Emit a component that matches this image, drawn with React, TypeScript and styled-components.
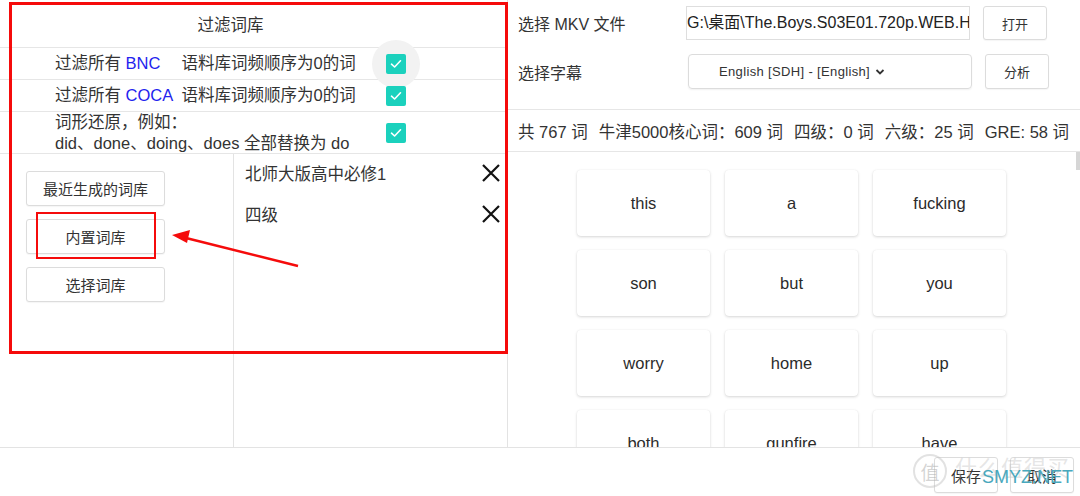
import React from 'react';
import styled, { createGlobalStyle } from 'styled-components';

const GlobalStyle = createGlobalStyle`
  html, body {
    margin: 0;
    padding: 0;
    background: #fff;
  }
  body {
    font-family: "Liberation Sans", "Noto Sans CJK SC", sans-serif;
    color: #333;
  }
`;

const Page = styled.div`
  position: relative;
  width: 1080px;
  height: 496px;
  overflow: hidden;
  display: flex;
  flex-direction: column;
`;

const Main = styled.div`
  display: flex;
  height: 448px;
  border-bottom: 1px solid #e3e3e3;
  box-sizing: border-box;
`;

const LeftPanel = styled.div`
  width: 508px;
  flex-shrink: 0;
  border-right: 1px solid #e3e3e3;
  box-sizing: border-box;
  display: flex;
  flex-direction: column;
`;

const Title = styled.div`
  height: 47px;
  display: flex;
  align-items: center;
  justify-content: center;
  padding-right: 46px;
  font-size: 16.5px;
  border-bottom: 1px solid #e6e6e6;
`;

const FilterRow = styled.div<{ tall?: boolean }>`
  height: ${(p) => (p.tall ? 41 : 31)}px;
  display: flex;
  align-items: center;
  padding-left: 55px;
  border-bottom: 1px solid #e6e6e6;
  font-size: 16.5px;
  line-height: 21px;
  position: relative;
`;

const RowText = styled.div`
  width: 331px;
  white-space: nowrap;
`;

const Corpus = styled.span`
  display: inline-block;
  width: 56px;
  color: #2323ee;
`;

const CheckWrap = styled.div`
  position: relative;
  width: 20px;
  height: 20px;
`;

const Halo = styled.div`
  position: absolute;
  left: -14px;
  top: -14px;
  width: 48px;
  height: 48px;
  border-radius: 50%;
  background: #f2f2f2;
`;

const CheckBox = styled.div`
  position: relative;
  width: 20px;
  height: 20px;
  border-radius: 2px;
  background: #1bd1bd;
  display: flex;
  align-items: center;
  justify-content: center;
`;

const LibArea = styled.div`
  flex: 1;
  display: flex;
`;

const LibButtons = styled.div`
  width: 234px;
  border-right: 1px solid #e3e3e3;
  box-sizing: border-box;
  display: flex;
  flex-direction: column;
  gap: 13px;
  padding: 17px 0 0 26px;
`;

const OutlineButton = styled.div<{ w?: number; h?: number; fs?: number }>`
  width: ${(p) => p.w ?? 139}px;
  height: ${(p) => p.h ?? 35}px;
  box-sizing: border-box;
  border: 1px solid #dcdcdc;
  border-radius: 3px;
  background: #fff;
  display: flex;
  align-items: center;
  justify-content: center;
  font-size: ${(p) => p.fs ?? 15}px;
  color: #333;
  box-shadow: 0 1px 1px rgba(0, 0, 0, 0.04);
`;

const LibList = styled.div`
  flex: 1;
  display: flex;
  flex-direction: column;
  padding: 7px 6px 0 11px;
  gap: 18px;
`;

const LibItem = styled.div`
  display: flex;
  justify-content: space-between;
  align-items: center;
  font-size: 16.5px;
  height: 23px;
`;

const RightPanel = styled.div`
  flex: 1;
  display: flex;
  flex-direction: column;
  min-width: 0;
`;

const FormArea = styled.div`
  height: 110px;
  border-bottom: 1px solid #e6e6e6;
  display: grid;
  grid-template-columns: 168px 1fr;
  grid-template-rows: 34px 35px;
  row-gap: 14px;
  padding: 6px 0 0 10px;
  box-sizing: border-box;
  align-items: center;
`;

const Label = styled.div`
  font-size: 16px;
  color: #333;
`;

const FieldRow = styled.div<{ shift?: number }>`
  display: flex;
  gap: 13px;
  margin-left: ${(p) => p.shift ?? 0}px;
  height: 100%;
`;

const PathInput = styled.div`
  width: 284px;
  box-sizing: border-box;
  border: 1px solid #dedede;
  font-size: 16px;
  line-height: 32px;
  white-space: nowrap;
  overflow: hidden;
  color: #222;
`;

const Select = styled.div`
  width: 284px;
  box-sizing: border-box;
  border: 1px solid #dcdcdc;
  border-radius: 4px;
  display: flex;
  align-items: center;
  gap: 5px;
  padding-left: 30px;
  font-size: 13px;
  letter-spacing: 0.35px;
  color: #333;
  box-shadow: 0 1px 2px rgba(0, 0, 0, 0.06);
`;

const Stats = styled.div`
  height: 41px;
  border-bottom: 1px solid #e6e6e6;
  display: flex;
  align-items: center;
  gap: 11px;
  padding-left: 10px;
  font-size: 16.5px;
  white-space: nowrap;
  overflow: hidden;
`;

const StatItem = styled.span`
  flex-shrink: 0;
`;

const WordArea = styled.div`
  position: relative;
  flex: 1;
  overflow: hidden;
`;

const ScrollThumb = styled.div`
  position: absolute;
  right: 0;
  top: 0;
  width: 4px;
  height: 18px;
  background: #d6d6d6;
`;

const WordGrid = styled.div`
  display: grid;
  grid-template-columns: repeat(3, 133px);
  grid-auto-rows: 66px;
  column-gap: 15px;
  row-gap: 14px;
  padding: 18px 0 0 69px;
`;

const WordCard = styled.div`
  border-radius: 4px;
  background: #fff;
  box-shadow: 0 1px 3px rgba(0, 0, 0, 0.16), 0 0 1px rgba(0, 0, 0, 0.08);
  display: flex;
  align-items: center;
  justify-content: center;
  font-size: 16.5px;
  color: #2b2b2b;
`;

const Footer = styled.div`
  height: 48px;
  display: flex;
  justify-content: flex-end;
  align-items: flex-start;
  gap: 12px;
  padding: 9px 6px 0 0;
  box-sizing: border-box;
`;

const RedBox = styled.div<{ x: number; y: number; w: number; h: number; t: number }>`
  position: absolute;
  left: ${(p) => p.x}px;
  top: ${(p) => p.y}px;
  width: ${(p) => p.w}px;
  height: ${(p) => p.h}px;
  border: ${(p) => p.t}px solid #f50b0b;
  box-sizing: border-box;
  pointer-events: none;
`;

const ArrowSvg = styled.svg`
  position: absolute;
  left: 0;
  top: 0;
  pointer-events: none;
`;

const Watermark = styled.div`
  position: absolute;
  left: 913px;
  top: 452px;
  width: 160px;
  height: 44px;
  pointer-events: none;
`;

const WmBadge = styled.div`
  position: absolute;
  left: 0;
  top: 2px;
  width: 30px;
  height: 30px;
  border-radius: 50%;
  border: 2px solid rgba(190, 190, 190, 0.45);
  display: flex;
  align-items: center;
  justify-content: center;
  font-size: 19px;
  color: rgba(175, 175, 175, 0.55);
`;

const WmText = styled.div`
  position: absolute;
  left: 42px;
  top: -2px;
  font-family: "Noto Sans CJK SC", sans-serif;
  font-size: 22px;
  color: rgba(190, 190, 190, 0.4);
  letter-spacing: 1px;
`;

const WmSite = styled.div`
  position: absolute;
  left: 69px;
  top: 15px;
  font-family: "Liberation Sans", Arial, sans-serif;
  font-size: 18px;
  color: #49a8bd;
`;

const Check = () => (
  <svg width="12" height="10" viewBox="0 0 12 10">
    <path d="M1.5 5.2 L4.6 8 L10.5 1.8" fill="none" stroke="#fff" strokeWidth="1.6" strokeLinecap="round" strokeLinejoin="round" />
  </svg>
);

const CloseX = () => (
  <svg width="20" height="20" viewBox="0 0 20 20">
    <path d="M2 2 L18 18 M18 2 L2 18" stroke="#111" strokeWidth="2.2" />
  </svg>
);

const Chevron = () => (
  <svg width="10" height="8" viewBox="0 0 10 8">
    <path d="M1.5 2 L5 5.5 L8.5 2" fill="none" stroke="#333" strokeWidth="1.8" />
  </svg>
);

const words = ['this', 'a', 'fucking', 'son', 'but', 'you', 'worry', 'home', 'up', 'both', 'gunfire', 'have'];

const stats = ['共 767 词', '牛津5000核心词：609 词', '四级：0 词', '六级：25 词', 'GRE: 58 词'];

export default function App() {
  return (
    <Page>
      <GlobalStyle />
      <Main>
        <LeftPanel>
          <Title>过滤词库</Title>
          <FilterRow>
            <RowText>
              过滤所有 <Corpus>BNC</Corpus>语料库词频顺序为0的词
            </RowText>
            <CheckWrap>
              <Halo />
              <CheckBox>
                <Check />
              </CheckBox>
            </CheckWrap>
          </FilterRow>
          <FilterRow>
            <RowText>
              过滤所有 <Corpus>COCA</Corpus>语料库词频顺序为0的词
            </RowText>
            <CheckWrap>
              <CheckBox>
                <Check />
              </CheckBox>
            </CheckWrap>
          </FilterRow>
          <FilterRow tall>
            <RowText>
              词形还原，例如：
              <br />
              did、done、doing、does 全部替换为 do
            </RowText>
            <CheckWrap>
              <CheckBox>
                <Check />
              </CheckBox>
            </CheckWrap>
          </FilterRow>
          <LibArea>
            <LibButtons>
              <OutlineButton>最近生成的词库</OutlineButton>
              <OutlineButton>内置词库</OutlineButton>
              <OutlineButton>选择词库</OutlineButton>
            </LibButtons>
            <LibList>
              <LibItem>
                北师大版高中必修1
                <CloseX />
              </LibItem>
              <LibItem>
                四级
                <CloseX />
              </LibItem>
            </LibList>
          </LibArea>
        </LeftPanel>
        <RightPanel>
          <FormArea>
            <Label>选择 MKV 文件</Label>
            <FieldRow>
              <PathInput>G:\桌面\The.Boys.S03E01.720p.WEB.H264-GGEZ.mkv</PathInput>
              <OutlineButton w={64} h={34} fs={13}>打开</OutlineButton>
            </FieldRow>
            <Label>选择字幕</Label>
            <FieldRow shift={2}>
              <Select>
                English [SDH] - [English] <Chevron />
              </Select>
              <OutlineButton w={64} h={35} fs={13}>分析</OutlineButton>
            </FieldRow>
          </FormArea>
          <Stats>
            {stats.map((s) => (
              <StatItem key={s}>{s}</StatItem>
            ))}
          </Stats>
          <WordArea>
            <ScrollThumb />
            <WordGrid>
              {words.map((w) => (
                <WordCard key={w}>{w}</WordCard>
              ))}
            </WordGrid>
          </WordArea>
        </RightPanel>
      </Main>
      <Footer>
        <OutlineButton w={64} h={36}>保存</OutlineButton>
        <OutlineButton w={64} h={36}>取消</OutlineButton>
      </Footer>

      <RedBox x={9} y={2} w={499} h={352} t={3} />
      <RedBox x={36} y={212} w={120} h={47} t={2} />
      <ArrowSvg width="1080" height="496">
        <line x1="298" y1="266" x2="186" y2="238" stroke="#f50b0b" strokeWidth="2.5" />
        <polygon points="172,235 190,230 187,243" fill="#f50b0b" />
      </ArrowSvg>

      <Watermark>
        <WmBadge>值</WmBadge>
        <WmText>什么值得买</WmText>
        <WmSite>SMYZ.NET</WmSite>
      </Watermark>
    </Page>
  );
}
